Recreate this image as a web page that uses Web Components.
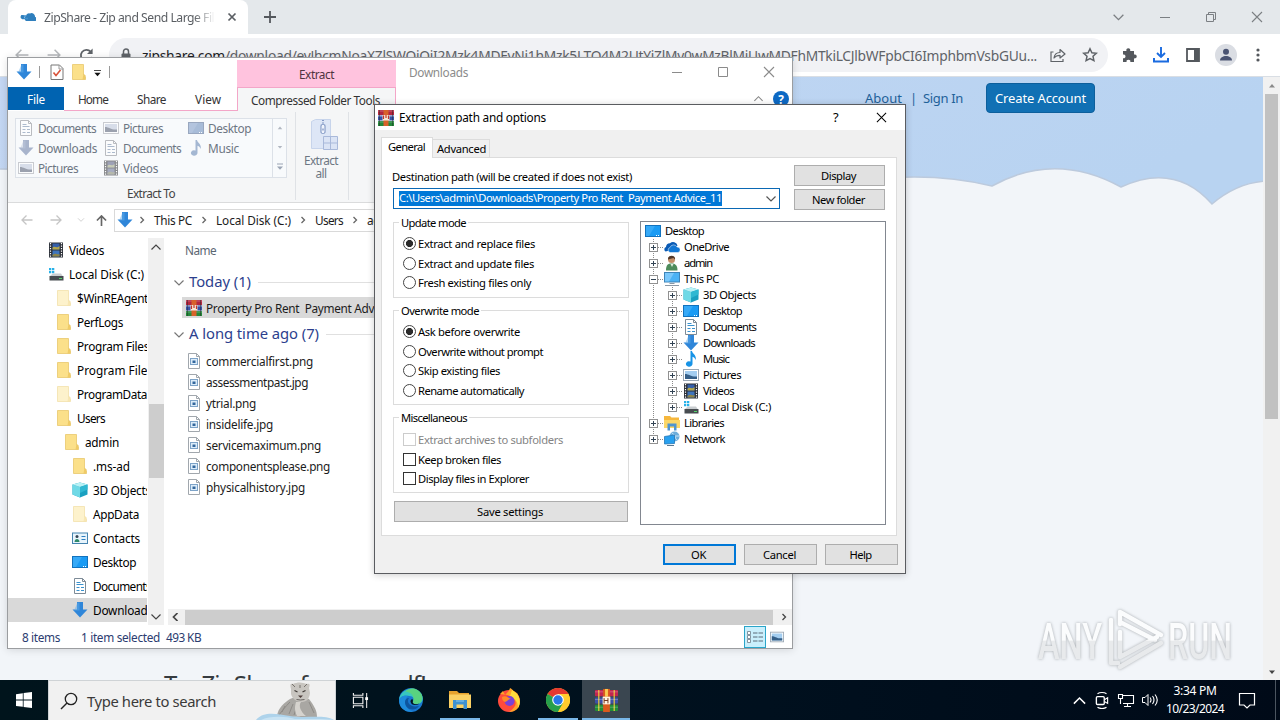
<!DOCTYPE html>
<html lang="en">
<head>
<meta charset="utf-8">
<title>Desktop</title>
<style>
  body { margin: 0; overflow: hidden; background: #f2f5f9; }
</style>
</head>
<body>
<win-desktop></win-desktop>
<script>
const FONT = `"Noto Sans", "Open Sans", sans-serif`;

// All icons are drawn on the viewBox given first
const RAR_BOOKS = `
  <rect x="0" y="0" width="16" height="5" fill="#b3263f"/><rect x="0" y="5.5" width="16" height="5" fill="#3653a8"/><rect x="0" y="11" width="16" height="5" fill="#23883a"/>
  <path d="M0 1h16M0 6.500h16M0 12h16" stroke="#fff" stroke-opacity=".35" stroke-width=".8"/>
  <path d="M1.500 0v16M14.500 0v16" stroke="#222" stroke-opacity=".45"/>
  <rect x="5.500" y="0" width="5" height="16" fill="#d8622a"/><rect x="4.500" y="5" width="7" height="5.500" fill="#f7ead5"/><path d="M5.500 5.500v3.500M8 5v3M10.500 5.500v3.500" stroke="#c2352b" stroke-width="1.200" fill="none"/>`;
const ICONS = {
  down: ["0 0 16 16", `<path d="M5 0h6v7.500h4.500L8 15.500.500 7.500H5z" fill="#2f86d9"/><path d="M5.500.500h2v8H2z" fill="#62abea" opacity=".5"/>`],
  folder: ["0 0 16 16", `<path d="M1.500.500h11v12l2 3h-13z" fill="#fbe08a"/><path d="M12.500 9.500l2 2v4h-3z" fill="#f0cb66"/><path d="M1.500.500h11V11l2 2v2.500h-13z" fill="none" stroke="#e8c86c" stroke-width=".8"/>`],
  folderlight: ["0 0 16 16", `<path d="M1.500.500h11v12l2 3h-13z" fill="#fdf2cc"/><path d="M12.500 9.500l2 2v4h-3z" fill="#f8e7b4"/><path d="M1.500.500h11V11l2 2v2.500h-13z" fill="none" stroke="#f2e1ab" stroke-width=".8"/>`],
  rar: ["0 0 16 16", RAR_BOOKS],
  monitor: ["0 0 16 16", `<rect x=".5" y="2.500" width="15" height="11" fill="#1a9bf4" stroke="#1272bd"/><path d="M1 3h9L4 13H1z" fill="#58bbfb" opacity=".45"/><path d="M11 12.500h1M13 12.500h1" stroke="#fff"/>`],
  pc: ["0 0 16 16", `<rect x=".5" y="1.500" width="15" height="9.500" fill="#4bb2f5" stroke="#3e84b8"/><path d="M1 2h9L5 10.500H1z" fill="#a3dbff" opacity=".55"/><path d="M5.500 12.500h5M1 14.500h14" stroke="#8b98a5"/>`],
  onedrive: ["0 0 16 16", `<path d="M1.500 12.500A2.500 2.500 0 0 1 2 8a4 4 0 0 1 4-3.800 4.500 4.500 0 0 1 7.500 2.300L10 10.500z" fill="#0a5bb5"/><path d="M6 13.500a2.600 2.600 0 0 1 0-5 3.800 3.800 0 0 1 7-.5 2.800 2.800 0 0 1 1 5.500z" fill="#1277d4" stroke="#fff" stroke-width=".5"/>`],
  user: ["0 0 16 16", `<circle cx="7.500" cy="4.500" r="3.500" fill="#c38e68"/><path d="M4 4.500C3.500-.5 12-.5 11 4.500L9.500 3z" fill="#51382a"/><path d="M2 15.500c0-6 2-7 5.500-7s6 1.500 6 7z" fill="#4d8b5b"/><path d="M6.500 9l1.500 3 1.500-3z" fill="#dfeee0"/>`],
  cube: ["0 0 16 16", `<path d="M8 .500l7.500 2v10L8 15.500.500 12.500v-10z" fill="#1aa0c0"/><path d="M.5 2.500L8 5v10.500L.500 12.500z" fill="#6fd9e6"/><path d="M.5 2.500l7.500-2 7.500 2L8 5z" fill="#b8f1f5"/><path d="M8 5l7.500-2.500v5L8 11z" fill="#2fb8d2"/>`],
  doc: ["0 0 16 16", `<path d="M2.500.500h8l3 3v12h-11z" fill="#fff" stroke="#7d8b97"/><path d="M10.500.500v3h3" fill="none" stroke="#7d8b97"/><path d="M4.500 4.500h4M4.500 6.500h7M4.500 9.500h3M9 9.500h3M4.500 12.500h3M9 12.500h3" stroke="#3a92ce"/>`],
  music: ["0 0 16 16", `<path d="M7.500 0h1.500c.5 3 5 4 3.500 9C12 6.500 10 6 9.500 5.800V13a3.300 2.700 0 1 1-2-2.500z" fill="#1793e6"/>`],
  picture: ["0 0 16 16", `<rect x=".5" y="2.500" width="15" height="11" fill="#fff" stroke="#9ba8b5"/><rect x="2" y="4" width="12" height="8" fill="#a3cdf0"/><path d="M2 7c4 0 6 3 12 2.500V12H2z" fill="#355f88"/>`],
  film: ["0 0 16 16", `<rect x="1" y=".5" width="14" height="15" fill="#2c3038"/><path d="M2.500 1v14M13.500 1v14" stroke="#fff" stroke-width="1.200" stroke-dasharray="1.200 1.300"/><rect x="4.500" y="1.500" width="7" height="6" fill="#345faa"/><path d="M4.500 6c2-3 4 1 7-2v3.500h-7z" fill="#b3a64a"/><rect x="4.500" y="8.500" width="7" height="6" fill="#3f75bd"/><path d="M4.500 13c3-3 4 0 7-1v2.500h-7z" fill="#8f8447"/>`],
  disk: ["0 0 16 16", `<path d="M1 2h2.300v2.300H1zM4 2h2.300v2.300H4zM1 5h2.300v2.300H1zM4 5h2.300v2.300H4z" fill="#27b1e8"/><path d="M3 9l2-1.500h8l2 3H1.500z" fill="#c9cdd0"/><rect x="1.500" y="10" width="14" height="4.500" fill="#474c50"/><rect x="11" y="12" width="3" height="1" fill="#54d66a"/>`],
  libs: ["0 0 16 16", `<path d="M0 1h6l1.500 1.500H15V13H0z" fill="#f6b73c"/><path d="M0 5h16v8H0z" fill="#fbd768"/><path d="M3.500 15.500V8.500h9v7h-2.500v-4H6v4z" fill="#4f95cf"/>`],
  network: ["0 0 16 16", `<circle cx="10.500" cy="5.500" r="5" fill="#6eaedb"/><path d="M8 2c3 1 3 6 5 7M6 5h9" stroke="#c7e3f5" fill="none"/><path d="M.5 5.500l10-1.500v8.500l-10 .5z" fill="#28a0ef" stroke="#2377b7" stroke-width=".8"/><path d="M3 14.500h7" stroke="#5b7890"/>`],
  contacts: ["0 0 16 16", `<rect x=".5" y="3" width="15" height="10.500" fill="#e7f4fc" stroke="#4583af"/><circle cx="5" cy="6.500" r="1.500" fill="#345"/><path d="M2.500 12c0-4 5-4 5 0z" fill="#2e8a6a"/><path d="M9.500 6.500h4M9.500 9.500h4" stroke="#2d7fc1"/>`],
  imgfile: ["0 0 16 16", `<path d="M2.500.500h8l3 3v12h-11z" fill="#fff" stroke="#a1a7ad"/><path d="M10.500.500v3h3" fill="none" stroke="#a1a7ad"/><rect x="4.500" y="5.500" width="7" height="6" fill="#dcecf9" stroke="#7da3c8"/><rect x="6.500" y="7.500" width="3" height="2.500" fill="#33679d"/>`],
  checkpage: ["0 0 16 16", `<path d="M2 1h8.500L14 4.500V15.500H2z" fill="#fff" stroke="#777"/><path d="M10 1v4h4" fill="none" stroke="#999"/><path d="M4.500 8.500l2.500 3L11.500 6" fill="none" stroke="#d9533a" stroke-width="1.600"/>`],
  gallerymore: ["0 0 8 8", `<path d="M1 1h6" stroke="#9aa4b4"/><path d="M1 3.500h6L4 6.800z" fill="#9aa4b4"/>`],
  triup: ["0 0 8 8", `<path d="M1 5.500h6L4 2z" fill="currentColor"/>`],
  tridown: ["0 0 8 8", `<path d="M1 2.500h6L4 6z" fill="currentColor"/>`],
  qat: ["0 0 8 8", `<path d="M0 .5h8" stroke="#222"/><path d="M.5 3h7L4 7z" fill="#111"/>`],
  zip: ["0 0 28 32", `<path d="M1.500 2.500l4-2h15v27l-4 2h-15z" fill="#dde6f6" stroke="#c7d4eb"/><path d="M13 5v9" stroke="#b3c2e0" stroke-width="5" opacity=".5"/><path d="M13 1v6" stroke="#8197c3" stroke-dasharray="1 1.500" stroke-width="2"/><rect x="11" y="5.500" width="4" height="9" rx="1.500" fill="#f0f4fc" stroke="#7e95c2"/><path d="M12.500 10.500h1" stroke="#5f7ab0" stroke-width="2"/><path d="M13.500 17.500h14v13h-14z" fill="#dbe4f5" stroke="#a9b9da"/><path d="M20.500 17v14M13 24h15" stroke="#a9b9da"/>`],
  larrow: ["0 0 12 12", `<path d="M11.500 6H1M5.500 1.500L1 6l4.500 4.500" fill="none" stroke="currentColor" stroke-width="1.300"/>`],
  rarrow: ["0 0 12 12", `<path d="M.5 6H11M6.500 1.500L11 6l-4.500 4.500" fill="none" stroke="currentColor" stroke-width="1.300"/>`],
  uarrow: ["0 0 12 12", `<path d="M6 12V1M1 6l5-5 5 5" fill="none" stroke="currentColor" stroke-width="1.800"/>`],
  cright: ["0 0 8 8", `<path d="M2.500 1l3 3-3 3" fill="none" stroke="currentColor" stroke-width="1.300"/>`],
  cleft: ["0 0 8 8", `<path d="M5.500 0l-4 4 4 4" fill="none" stroke="currentColor" stroke-width="1.700"/>`],
  cdown: ["0 0 12 12", `<path d="M1.500 3.500L6 8l4.500-4.500" fill="none" stroke="currentColor" stroke-width="1.200"/>`],
  cup: ["0 0 12 12", `<path d="M1.500 8.500L6 4l4.500 4.500" fill="none" stroke="currentColor" stroke-width="1.200"/>`],
  close: ["0 0 12 12", `<path d="M1 1l10 10M11 1L1 11" fill="none" stroke="currentColor" stroke-width="1.100"/>`],
  closebold: ["0 0 12 12", `<path d="M2.500 2.500l7 7M9.500 2.500l-7 7" fill="none" stroke="currentColor" stroke-width="1.700"/>`],
  max: ["0 0 12 12", `<path d="M1.500 1.500h9v9h-9z" fill="none" stroke="currentColor"/>`],
  min: ["0 0 12 12", `<path d="M1 6.500h10" stroke="currentColor"/>`],
  restore: ["0 0 12 12", `<path d="M1.500 3.500h7v7h-7zM3.500 3.500v-2h7v7h-2" fill="none" stroke="currentColor"/>`],
  plus: ["0 0 12 12", `<path d="M6 0v12M0 6h12" stroke="currentColor" stroke-width="1.800"/>`],
  favicon: ["0 0 16 16", `<path d="M6 12a3 3 0 0 1 0-5 3 3 0 0 1 4-2.500A3.500 3.500 0 0 1 15 8a2 2 0 0 1 0 4z" fill="#2f7fbd"/><path d="M1 7h5M2 9.500h6" stroke="#3d8fce" stroke-width="1.600"/><circle cx="2.500" cy="8" r="2" fill="#2f7fbd"/>`],
  reload: ["0 0 16 16", `<path d="M13.800 9.500A6 6 0 1 1 12.500 4" fill="none" stroke="#5f6368" stroke-width="1.900"/><path d="M14.500.500v6h-6z" fill="#5f6368"/>`],
  lock: ["0 0 12 14", `<rect x="1.500" y="5.500" width="9" height="8" rx="1" fill="#5f6368"/><path d="M3.500 6V3.500a2.500 2.500 0 0 1 5 0V6" fill="none" stroke="#5f6368" stroke-width="1.500"/>`],
  share: ["0 0 16 16", `<path d="M3.500 5H1v9.500h12V12" fill="none" stroke="#5f6368" stroke-width="1.200"/><path d="M4 11c.5-4 3-5.500 6-5.500V2.500L15 7l-5 4V8.300C7.500 8.300 5.500 9 4 11z" fill="none" stroke="#5f6368" stroke-width="1.200" stroke-linejoin="round"/>`],
  star: ["0 0 16 16", `<path d="M8 1.800l1.900 4 4.400.5-3.300 3 .9 4.300L8 11.500l-3.900 2.100.9-4.300-3.300-3 4.400-.5z" fill="none" stroke="#5f6368" stroke-width="1.500"/>`],
  puzzle: ["0 0 16 16", `<path d="M2 4h3.500a2 2 0 1 1 3.600 0H13v3.600a2 2 0 1 1 0 3.700V15H9.300a1.900 1.900 0 1 0-3.700 0H2v-3.800a1.900 1.900 0 1 0 0-3.600z" fill="#54585d"/>`],
  download: ["0 0 16 16", `<path d="M8 0v9.500M4 6l4 4 4-4" fill="none" stroke="#1a6be0" stroke-width="1.900"/><path d="M1 11v3.500h14V11" fill="none" stroke="#1a6be0" stroke-width="2"/>`],
  panel: ["0 0 16 16", `<path d="M2 2h12v12H2z" fill="none" stroke="#54585d" stroke-width="1.800"/><path d="M9 2h5v12H9z" fill="#54585d"/>`],
  avatar: ["0 0 22 22", `<circle cx="11" cy="11" r="11" fill="#dadde3"/><circle cx="11" cy="7.700" r="3" fill="#4a5473"/><path d="M5 16.500c0-6 12-6 12 0z" fill="#4a5473"/>`],
  dots: ["0 0 4 14", `<circle cx="2" cy="2" r="1.600" fill="#54585d"/><circle cx="2" cy="7" r="1.600" fill="#54585d"/><circle cx="2" cy="12" r="1.600" fill="#54585d"/>`],
  details: ["0 0 18 14", `<path d="M1.500 1.500h3v3h-3zM1.500 5.500h3v3h-3zM1.500 9.500h3v3h-3z" fill="#fff" stroke="#6b7a86" stroke-width=".8"/><path d="M7 3h4.500M12.500 3H17M7 7h4.500M12.500 7H17M7 11h4.500M12.500 11H17" stroke="#5a6b78"/>`],
  start: ["0 0 16 16", `<path d="M0 2.200l6.800-1v6.400H0zM7.600 1.100L16 0v7.600H7.600zM0 8.400h6.800v6.400L0 13.900zM7.600 8.400H16V16l-8.400-1.100z" fill="#fff"/>`],
  search: ["0 0 18 18", `<circle cx="11" cy="7" r="5.700" fill="none" stroke="#222" stroke-width="1.300"/><path d="M7 11L1 17" stroke="#222" stroke-width="1.400"/>`],
  cougar: ["0 0 80 38", `
    <path d="M22 34c1-8 7-13 13-17l5-2 14 2c6 8 8 12 8 18l-9 2c-9-5-23 0-31-3z" fill="#a9a7a3"/>
    <path d="M36 7c-1-4-1-6 2-5 4-2 9-2 14 0 3-1 3 1 2 4l1 5c-1 7-4 9-9 9s-9-4-10-8z" fill="#c8c5c0"/>
    <path d="M37 2l3 3M52 2l-3 3M45 3v3" stroke="#77726d"/><path d="M39.500 8.500l3 1.500M50.500 8.500l-3 1.500" stroke="#3f3a36" stroke-width="1.300"/>
    <path d="M43 13.500h5L45.500 16z" fill="#4c3c39"/><path d="M41.500 17.500l4 .5 4-.5" stroke="#6a6563" fill="none"/>
    <path d="M35 20c-5 5-8 9-11 13M38 22l-4 10M30 24l-3 6M54 20l5 11M42 24l-3 9" stroke="#8e8b87" fill="none"/>
    <path d="M46 20c-3 4 0 10 5 14h-9c-3-6-2-10-1-14z" fill="#d6d3ce"/>
    <path d="M1 38c8-9 20-6 34-4 14 3 34-2 44 4z" fill="#aed3eb"/>
    <path d="M6 38c8-4 24-4 34-1h26l14 1z" fill="#c9e3f3"/>`],
  taskview: ["0 0 18 18", `<path d="M1.500 1v2.500h10V1M1.500 17v-2.500h10V17M1.500 5.500h10v7h-10z" fill="none" stroke="#eee" stroke-width="1.200"/><path d="M15.500 1v16" stroke="#ddd" stroke-width="1.200"/><rect x="14" y="5.500" width="3" height="3" fill="#fff"/>`],
  edge: ["0 0 24 24", `<circle cx="12" cy="12" r="12" fill="#1977cf"/><path d="M.3 10C3 0 17-3 22.500 6c3 6 0 11-6 10-3-.5-3-1.500-2-3 1-3-1-5-4-5C6 7 1 8 .3 12z" fill="#37c6c0"/><path d="M14 .2C24 2 26 13 20 15.500c-3 1-7 .5-6-2C16 8 12 4 6 3.500 9 1 11 .2 14 .2z" fill="#65d66b" opacity=".75"/><path d="M9 8c-4 3-4 13 5 15.500C5 25-1 18 .3 11 3 7 7 7 9 8z" fill="#1e8bdc"/><path d="M10 10c-3 4 1 10 10 8-4 6-14 4-14-4 0-2 1.500-4 4-4z" fill="#0d559f"/><path d="M14 13c-1.500 3 3 4 6.500 2.500-4 3-8.500 1.500-9-2 0-1.500 1-2.500 2-2.500z" fill="#03131d"/>`],
  explorer: ["0 0 24 24", `<path d="M1 3h8l2 2h10v4H1z" fill="#e7a32e"/><path d="M1 6.500h22V20H1z" fill="#fbd164"/><path d="M5 21v-9h14v9h-3.500v-4.500h-7V21z" fill="#3e91d1"/><path d="M8 13h8" stroke="#8ccbf1"/>`],
  firefox: ["0 0 24 24", `<circle cx="12" cy="13" r="11" fill="#ff4b3c"/><path d="M3 6l3-3 2 4c3-3 4-4 5-7 4 2 3 4 7 5 6 10 2 19-8 19 8-5 9-11 2-15C11 6 6 7 3 6z" fill="#ffa329"/><path d="M15 2c9 5 9 13 6 18 0-7-3-9-8-12z" fill="#ffdd3c"/><circle cx="12.500" cy="13" r="5" fill="#7a42d8"/><path d="M5 9c4-2 6 1 9 2-3 0-4 3-6 3-2-1-3-2-3-5z" fill="#ff8a27"/>`],
  chrome: ["0 0 24 24", `<circle cx="12" cy="12" r="12" fill="#ffcb2d"/><path d="M12 12L1.600 6A12 12 0 0 1 22.400 6H12z" fill="#e5392f"/><path d="M12 12L1.600 6A12 12 0 0 0 12 24l5.200-9z" fill="#269f4b"/><path d="M12 6h10.400A12 12 0 0 1 12 24l5.200-9z" fill="#ffcb2d"/><circle cx="12" cy="12" r="5.800" fill="#fff"/><circle cx="12" cy="12" r="4.700" fill="#2878e8"/>`],
  rarbig: ["0 0 26 24", `<rect x="1" y="1" width="24" height="6.500" rx="1" fill="#c22650"/><rect x="1" y="9" width="24" height="6" rx="1" fill="#3c50a6"/><rect x="1" y="16.500" width="24" height="6.500" rx="1" fill="#218d37"/><path d="M5 1v22M21 1v22" stroke="#efcf3b" stroke-width="1.200"/><path d="M1 3h24M1 11h24M1 19h24" stroke="#fff" stroke-opacity=".25"/><rect x="9.500" y="0" width="7" height="24" fill="#db5a1d"/><path d="M13 0v8" stroke="#f9cb53" stroke-width="3"/><path d="M9 8h8v8H9z" fill="#fff3e0"/><path d="M10.500 9.500v5.500M10.500 12h4M14.500 9.500v5.500" stroke="#713015" fill="none"/>`],
  meet: ["0 0 16 16", `<rect x="3" y="5" width="7" height="7" rx="1" fill="none" stroke="#fff" stroke-width="1.200"/><path d="M10.500 7.500L13 6v5l-2.500-1.500M4 2.500c2-1.500 6-1.500 8 0M4 14.500c2 1.500 6 1.500 8 0" fill="none" stroke="#fff"/>`],
  net: ["0 0 18 16", `<path d="M5 3.500h11.500v8H6M10.500 12v2.500M7 14.500h7" fill="none" stroke="#fff" stroke-width="1.100"/><path d="M1.500 2.500h4v4h-4zM3.500 7v5" fill="none" stroke="#fff" stroke-width="1.100"/>`],
  sound: ["0 0 18 16", `<path d="M1.500 5.500h2.500L7 2.500v11L4 10.500H1.500z" fill="none" stroke="#fff"/><path d="M9 5.500q2 2.500 0 5M11.500 4q3 4 0 8M14 2.500q4.500 5.500 0 11" fill="none" stroke="#fff" stroke-width="1.100"/>`],
  notify: ["0 0 18 18", `<path d="M1.500 2.500h15v11.500H12L9 17l-3-3H1.500z" fill="none" stroke="#fff" stroke-width="1.200"/>`]
};

class UIIcon extends HTMLElement {
  connectedCallback() {
    if (this.shadowRoot) return;
    this.attachShadow({ mode: "open" });
    const [box, art] = ICONS[this.getAttribute("name")];
    const w = this.getAttribute("w") || 16;
    const h = this.getAttribute("h") || w;
    this.shadowRoot.innerHTML = `
      <style>
        :host { display: block; flex: none; width: ${w}px; height: ${h}px; }
        svg { display: block; }
      </style>
      <svg width="${w}" height="${h}" viewBox="${box}">${art}</svg>`;
  }
}

// One line of text, letter-spaced so that it fills the width in the w attribute
class FitText extends HTMLElement {
  connectedCallback() {
    if (this.shadowRoot) return;
    this.attachShadow({ mode: "open" });
    this.shadowRoot.innerHTML = `
      <style>
        :host { display: block; flex: none; }
        span { display: inline-block; white-space: pre; }
      </style>
      <span><slot></slot></span>`;
    const w = parseFloat(this.getAttribute("w"));
    const span = this.shadowRoot.querySelector("span");
    const natural = span.getBoundingClientRect().width;
    if (!w || !natural) return;
    const count = this.textContent.length;
    span.style.letterSpacing = (w - natural) / count + "px";
    this.style.width = w + "px";
  }
}

class WinButton extends HTMLElement {
  constructor() {
    super();
    this.attachShadow({ mode: "open" }).innerHTML = `
      <style>
        :host {
          display: flex; align-items: center; justify-content: center;
          box-sizing: border-box; height: 21px; padding-right: 2px;
          background: #e1e1e1; border: 1px solid #adadad;
        }
        :host([primary]) { border: 2px solid #0078d7; }
      </style>
      <slot></slot>`;
  }
}

class OptionRow extends HTMLElement {
  constructor() {
    super();
    this.attachShadow({ mode: "open" }).innerHTML = `
      <style>
        :host { display: flex; align-items: center; gap: 2px; height: 19.5px; }
        :host([disabled]) { color: #848484; }
        .mark {
          box-sizing: border-box; width: 13px; height: 13px; flex: none;
          border: 1px solid #333; background: #fff;
        }
        :host([radio]) .mark { border-radius: 50%; border-color: #444; }
        :host([checked]) .mark { background: radial-gradient(circle, #2b2b2b 0 3.2px, #fff 3.900px); }
        :host([disabled]) .mark { border-color: #ccc; }
      </style>
      <span class="mark"></span><slot></slot>`;
  }
}

class GroupBox extends HTMLElement {
  constructor() {
    super();
    this.attachShadow({ mode: "open" }).innerHTML = `
      <style>
        :host { display: block; box-sizing: border-box; border: 1px solid #dcdcdc; padding: 0 9px; }
        .legend { width: max-content; height: 16px; line-height: 16px; margin: -8px 0 var(--legend-gap, 3px) -4px; padding: 0 2px; background: #fff; }
      </style>
      <div class="legend"><slot name="legend"></slot></div>
      <slot></slot>`;
  }
}

const TREE = [
  [0, "monitor", "Desktop", 39],
  [1, "onedrive", "OneDrive", 45, "+"],
  [1, "user", "admin", 28, "+"],
  [1, "pc", "This PC", 35, "-"],
  [2, "cube", "3D Objects", 53, "+"],
  [2, "monitor", "Desktop", 39, "+"],
  [2, "doc", "Documents", 53, "+"],
  [2, "down", "Downloads", 52, "+"],
  [2, "music", "Music", 26, "+"],
  [2, "picture", "Pictures", 38, "+"],
  [2, "film", "Videos", 31, "+"],
  [2, "disk", "Local Disk (C:)", 68, "+", "last"],
  [1, "libs", "Libraries", 40, "+"],
  [1, "network", "Network", 41, "+", "last"]
];

class FolderTree extends HTMLElement {
  connectedCallback() {
    const line = `stroke="#8a8a8a" stroke-dasharray="1 1"`;
    const pipe = `<svg width="19" height="16"><path d="M9.500 0v16" ${line}/></svg>`;
    const rows = TREE.map(([level, icon, text, w, sign, last]) => {
      const knob = level ? `<svg width="19" height="16">
        <path d="M9.500 0v${last ? 8 : 16}M10 8.500h9" ${line}/>
        <rect x="5.500" y="4.500" width="8" height="8" fill="#fff" stroke="#919191"/>
        <path d="M7 8.500h5${sign === "+" ? "M9.500 6v5" : ""}" stroke="#345"/></svg>` : "";
      return `<div class="row l${level}">${level === 2 ? pipe : ""}${knob}
        <ui-icon name="${icon}"></ui-icon><fit-text w="${w}">${text}</fit-text></div>`;
    }).join("");
    this.attachShadow({ mode: "open" }).innerHTML = `
      <style>
        :host { display: block; box-sizing: border-box; border: 1px solid #828790; background: #fff; padding: 1px 3px; }
        .row { display: flex; align-items: center; height: 16px; }
        svg { display: block; flex: none; }
        ui-icon { margin: 0 4px 0 1px; }
        fit-text { margin-top: -2px; }
      </style>${rows}`;
  }
}

const option = (text, w, attrs) => `<option-row ${attrs}><fit-text w="${w}">${text}</fit-text></option-row>`;

class ExtractDialog extends HTMLElement {
  constructor() {
    super();
    this.attachShadow({ mode: "open" }).innerHTML = `
      <style>
        :host {
          display: flex; flex-direction: column; box-sizing: border-box;
          width: 532px; height: 470px; border: 1px solid #5a5c60; background: #f0f0f0;
          font: 11.2px ${FONT}; color: #000; box-shadow: 0 1px 7px rgba(0, 0, 0, .2);
        }
        header { display: flex; align-items: center; height: 25px; background: #fff; padding: 0 18px 0 3px; font-size: 11.8px; }
        header fit-text:first-of-type { margin: -2px auto 0 5px; }
        header fit-text:last-of-type { margin: -1px 36px 0 0; font-size: 13px; }
        .tabs { display: flex; align-items: flex-end; height: 27px; padding-left: 6px; position: relative; z-index: 1; }
        .tab { box-sizing: border-box; border: 1px solid #dcdcdc; border-bottom: 0; }
        .tab.on { width: 52px; height: 21px; margin-bottom: -1px; padding: 1px 0 0 6px; background: #fff; }
        .tab.off { width: 57px; height: 18px; padding: 0 0 0 4px; line-height: 17px; border-left: 0; }
        .panel { box-sizing: border-box; width: 516px; height: 379px; margin-left: 6px; border: 1px solid #dcdcdc; background: #fff; padding: 7px 10px 0 11px; }
        .top { display: flex; gap: 14px; height: 45px; }
        .dest { width: 387px; }
        .label { height: 23px; display: flex; align-items: center; margin-left: -1px; }
        .combo { display: flex; align-items: center; justify-content: space-between; box-sizing: border-box; height: 21px; border: 1px solid #0a68b4; padding: 0 2px 0 5px; color: #555; }
        .picked { background: #0078d7; color: #fff; height: 15px; line-height: 14px; box-sizing: border-box; }
        .side { width: 91px; display: grid; align-content: start; gap: 3px; }
        .main { display: flex; gap: 11px; }
        .modes { width: 236px; padding-top: 12px; display: flex; flex-direction: column; gap: 12px; }
        .modes win-button { margin: -4px 1px 0; }
        folder-tree { width: 246px; height: 304px; margin-top: 11px; }
        footer { display: flex; justify-content: flex-end; gap: 8px; padding: 8px 7px 0; }
        footer win-button { width: 73px; }
      </style>
      <header>
        <ui-icon name="rar" w="16"></ui-icon><fit-text w="147">Extraction path and options</fit-text>
        <fit-text w="7">?</fit-text><ui-icon name="close" w="11"></ui-icon>
      </header>
      <div class="tabs">
        <div class="tab on"><fit-text w="37">General</fit-text></div>
        <div class="tab off"><fit-text w="49">Advanced</fit-text></div>
      </div>
      <div class="panel">
        <div class="top">
          <div class="dest">
            <div class="label"><fit-text w="240">Destination path (will be created if does not exist)</fit-text></div>
            <div class="combo">
              <fit-text class="picked" w="323">C:\\Users\\admin\\Downloads\\Property Pro Rent  Payment Advice_11</fit-text>
              <ui-icon name="cdown" w="12"></ui-icon>
            </div>
          </div>
          <div class="side">
            <win-button><fit-text w="35">Display</fit-text></win-button>
            <win-button><fit-text w="53">New folder</fit-text></win-button>
          </div>
        </div>
        <div class="main">
          <div class="modes">
            <group-box style="height:76px">
              <fit-text slot="legend" w="65">Update mode</fit-text>
              ${option("Extract and replace files", 117, "radio checked")}
              ${option("Extract and update files", 116, "radio")}
              ${option("Fresh existing files only", 113, "radio")}
            </group-box>
            <group-box style="height:95px">
              <fit-text slot="legend" w="78">Overwrite mode</fit-text>
              ${option("Ask before overwrite", 102, "radio checked")}
              ${option("Overwrite without prompt", 125, "radio")}
              ${option("Skip existing files", 82, "radio")}
              ${option("Rename automatically", 106, "radio")}
            </group-box>
            <group-box style="height:76px;--legend-gap:4px">
              <fit-text slot="legend" w="66">Miscellaneous</fit-text>
              ${option("Extract archives to subfolders", 145, "disabled")}
              ${option("Keep broken files", 83, "")}
              ${option("Display files in Explorer", 111, "")}
            </group-box>
            <win-button><fit-text w="66">Save settings</fit-text></win-button>
          </div>
          <folder-tree></folder-tree>
        </div>
      </div>
      <footer>
        <win-button primary><fit-text w="15">OK</fit-text></win-button>
        <win-button><fit-text w="33">Cancel</fit-text></win-button>
        <win-button><fit-text w="22">Help</fit-text></win-button>
      </footer>`;
  }
}

const GALLERY = [
  ["doc", "Documents", 58], ["picture", "Pictures", 40], ["monitor", "Desktop", 43],
  ["down", "Downloads", 59], ["doc", "Documents", 58], ["music", "Music", 31],
  ["picture", "Pictures", 40], ["film", "Videos", 35]
];

class ExplorerRibbon extends HTMLElement {
  constructor() {
    super();
    const items = GALLERY.map(([icon, text, w]) =>
      `<div class="item"><ui-icon name="${icon}"></ui-icon><fit-text w="${w}">${text}</fit-text></div>`).join("");
    this.attachShadow({ mode: "open" }).innerHTML = `
      <style>
        :host { display: flex; height: 91px; background: #f5f6f7; border-bottom: 1px solid #dadbdc; color: #6d7683; }
        .group { width: 288px; padding: 6px 0 0 7px; box-sizing: border-box; border-right: 1px solid #dfe2e6; margin: 1px 0 2px; height: 88px; }
        .gallery { display: flex; box-sizing: border-box; width: 272px; height: 60px; border: 1px solid #dce1e8; background: #f8fafc; }
        .grid { display: grid; grid-template-columns: 85px 85px 86px; grid-auto-rows: 20px; flex: 1; }
        .item { display: flex; align-items: center; gap: 4px; padding-left: 2px; margin-top: -2px; }
        .item ui-icon { filter: saturate(.4) hue-rotate(15deg); opacity: .55; }
        .more { width: 14px; border-left: 1px solid #dce1e8; display: grid; place-items: center; color: #b0b6c0; }
        .name { margin-top: 7px; padding-right: 8px; color: #444; display: flex; justify-content: center; }
        .extract { width: 53px; border-right: 1px solid #dfe2e6; display: flex; flex-direction: column; align-items: center; padding: 8px 2px 0 0; line-height: 13px; margin: 1px 0 2px; box-sizing: border-box; }
        .extract ui-icon { margin: -1px 0 3px 5px; }
      </style>
      <div class="group">
        <div class="gallery">
          <div class="grid">${items}</div>
          <div class="more"><ui-icon name="triup" w="6"></ui-icon><ui-icon name="tridown" w="6"></ui-icon><ui-icon name="gallerymore" w="8"></ui-icon></div>
        </div>
        <div class="name"><fit-text w="48">Extract To</fit-text></div>
      </div>
      <div class="extract">
        <ui-icon name="zip" w="28" h="32"></ui-icon><fit-text w="34">Extract</fit-text><fit-text w="11">all</fit-text>
      </div>`;
  }
}

const NAV = [
  [40, "film", "Videos", 35], [40, "disk", "Local Disk (C:)", 75],
  [48, "folderlight", "$WinREAgent", 71], [48, "folder", "PerfLogs", 46],
  [48, "folder", "Program Files", 72], [48, "folder", "Program Files (x86)", 106],
  [48, "folderlight", "ProgramData", 70], [48, "folder", "Users", 28],
  [56, "folder", "admin", 34], [64, "folder", ".ms-ad", 37],
  [64, "cube", "3D Objects", 58], [64, "folderlight", "AppData", 46],
  [64, "contacts", "Contacts", 47], [64, "monitor", "Desktop", 43],
  [64, "doc", "Documents", 58], [64, "down", "Downloads", 60]
];
const FILES = [
  ["commercialfirst.png", 107], ["assessmentpast.jpg", 102], ["ytrial.png", 50], ["insidelife.jpg", 67],
  ["servicemaximum.png", 115], ["componentsplease.png", 124], ["physicalhistory.jpg", 99]
];

class ExplorerWindow extends HTMLElement {
  constructor() {
    super();
    const nav = NAV.map(([pad, icon, text, w], i) =>
      `<div class="nav-row${i === NAV.length - 1 ? " on" : ""}" style="padding-left:${pad}px">
        <ui-icon name="${icon}"></ui-icon><fit-text w="${w}">${text}</fit-text></div>`).join("");
    const files = FILES.map(([text, w]) =>
      `<div class="file"><ui-icon name="imgfile"></ui-icon><fit-text w="${w}">${text}</fit-text></div>`).join("");
    const crumb = (text, w) => `<ui-icon name="cright" w="8"></ui-icon><fit-text w="${w}">${text}</fit-text>`;
    this.attachShadow({ mode: "open" }).innerHTML = `
      <style>
        :host {
          display: flex; flex-direction: column; box-sizing: border-box; overflow: hidden;
          width: 786px; height: 592px; border: 1px solid #9b9da0; background: #fff;
          font: 11.8px ${FONT}; color: #1c1c1c; box-shadow: 0 1px 8px rgba(0, 0, 0, .13);
        }
        .title { display: flex; align-items: center; box-sizing: border-box; height: 29px; padding: 0 17px 2px 8px; color: #8b8b8b; }
        .rule { width: 1px; height: 12px; background: #999; }
        .context { align-self: flex-end; box-sizing: border-box; width: 159px; height: 27px; margin-bottom: -2px; background: #ffc3de; color: #50333f; display: grid; place-items: center; }
        .title .caption { margin: 0 auto 0 13px; }
        .title .ctl { margin-left: 34px; }
        .tabs { display: flex; height: 24px; align-items: stretch; color: #333; }
        .tabs > * { box-sizing: border-box; display: flex; align-items: center; }
        .file-tab { width: 56px; height: 23px; justify-content: center; background: #0063b1; color: #fff; }
        .plain { width: 173px; padding-left: 14px; gap: 29px; border-bottom: 1px solid #f3a6c8; }
        .tool { width: 159px; justify-content: center; border: 1px solid #f3a6c8; border-bottom: 0; padding-right: 2px; background: #f5f6f7; }
        .rest { flex: 1; justify-content: flex-end; gap: 9px; padding-right: 3px; border-bottom: 1px solid #e4e5e6; color: #888; }
        .help { width: 16px; height: 16px; border-radius: 50%; background: #0d69c4; color: #fff; font-weight: 700; line-height: 16px; text-align: center; }
        .address { display: flex; align-items: center; height: 34px; margin-bottom: 1px; color: #666; }
        .address > ui-icon { color: #c5c5c5; }
        .address > .up { color: #666; }
        .path { box-sizing: border-box; width: 640px; height: 23px; margin: 0 0 0 7px; border: 1px solid #d9d9d9; display: flex; align-items: center; }
        .path fit-text { color: #1c1c1c; margin: -1px 8px 0; }
        .body { display: flex; height: 387px; }
        .nav { width: 139px; overflow: hidden; }
        .nav-row { display: flex; align-items: center; gap: 5px; height: 24px; color: #000; }
        .nav-row fit-text { margin-top: -1px; }
        .on { background: #d9d9d9; }
        .vbar { width: 16px; margin-left: 1px; background: #f0f0f0; display: flex; flex-direction: column; align-items: center; color: #444; box-sizing: border-box; padding: 3px 0 2px; }
        .vbar i { width: 15px; height: 74px; margin: 151px 0 auto; background: #cdcdcd; }
        .view { flex: 1; display: flex; flex-direction: column; padding-left: 4px; overflow: hidden; }
        .name { padding: 4px 0 0 17px; color: #5a6672; height: 23px; }
        .day { display: flex; align-items: center; gap: 4px; height: 29px; padding-left: 5px; font-size: 14.8px; color: #2c3f8e; }
        .day fit-text { margin-top: -3px; }
        .day i { flex: 1; height: 1px; background: #e0e0e0; margin-left: 3px; }
        .day ui-icon { color: #777; }
        .sel, .file { display: flex; align-items: center; gap: 4px; height: 21px; }
        .sel { margin-left: 14px; padding-left: 4px; background: #d9d9d9; }
        .file { padding-left: 18px; }
        .hbar { margin-top: auto; height: 16px; background: #f0f0f0; display: flex; align-items: center; justify-content: space-between; padding: 0 4px 0 4px; color: #444; }
        .hbar i { flex: 1; height: 15px; margin: 0 7px 0 5px; background: #cdcdcd; }
        .status { display: flex; align-items: center; height: 23px; padding: 0 8px 0 14px; color: #2b3c70; }
        .status .mode { box-sizing: border-box; width: 22px; height: 22px; display: grid; place-items: center; background: #c9effc; border: 1px solid #2aa5c9; margin: 0 4px 0 auto; }
      </style>
      <div class="title">
        <ui-icon name="down"></ui-icon><span class="rule" style="margin:0 11px 0 7px"></span>
        <ui-icon name="checkpage" style="margin-right:6px;margin-left:-2px"></ui-icon><ui-icon name="folder"></ui-icon>
        <ui-icon name="qat" w="7" style="margin:4px 8px 0 7px"></ui-icon><span class="rule"></span>
        <div class="context" style="margin-left:127px"><fit-text w="35">Extract</fit-text></div>
        <fit-text class="caption" w="59">Downloads</fit-text>
        <ui-icon name="min" w="12"></ui-icon><ui-icon class="ctl" name="max" w="12"></ui-icon><ui-icon class="ctl" name="close" w="12"></ui-icon>
      </div>
      <div class="tabs">
        <div class="file-tab"><fit-text w="18">File</fit-text></div>
        <div class="plain"><fit-text w="30">Home</fit-text><fit-text w="29">Share</fit-text><fit-text w="26">View</fit-text></div>
        <div class="tool"><fit-text w="129">Compressed Folder Tools</fit-text></div>
        <div class="rest"><ui-icon name="cup" w="11"></ui-icon><span class="help">?</span></div>
      </div>
      <explorer-ribbon></explorer-ribbon>
      <div class="address">
        <ui-icon name="larrow" w="12" style="margin:0 17px 0 13px"></ui-icon><ui-icon name="rarrow" w="12"></ui-icon>
        <ui-icon name="cdown" w="8" style="margin:0 11px 0 15px"></ui-icon><ui-icon class="up" name="uarrow" w="11"></ui-icon>
        <div class="path">
          <ui-icon name="down" w="16" style="margin:0 5px 0 2px"></ui-icon>
          ${crumb("This PC", 38)}${crumb("Local Disk (C:)", 75)}${crumb("Users", 28)}${crumb("admin", 34)}
        </div>
      </div>
      <div class="body">
        <div class="nav">${nav}</div>
        <div class="vbar"><ui-icon name="cup" w="12"></ui-icon><i></i><ui-icon name="cdown" w="12"></ui-icon></div>
        <div class="view">
          <div class="name"><fit-text w="31">Name</fit-text></div>
          <div class="day" style="margin-top:3px"><ui-icon name="cdown" w="12"></ui-icon><fit-text w="62">Today (1)</fit-text><i></i></div>
          <div class="sel"><ui-icon name="rar"></ui-icon><fit-text w="218">Property Pro Rent  Payment Advice_11.zip</fit-text></div>
          <div class="day" style="margin:2px 0 1px"><ui-icon name="cdown" w="12"></ui-icon><fit-text w="130">A long time ago (7)</fit-text><i></i></div>
          ${files}
          <div class="hbar"><ui-icon name="cleft" w="8"></ui-icon><i></i><ui-icon name="cright" w="8"></ui-icon></div>
        </div>
      </div>
      <div class="status">
        <fit-text w="38">8 items</fit-text><fit-text w="79" style="margin:0 6px 0 21px">1 item selected</fit-text><fit-text w="35">493 KB</fit-text>
        <span class="mode"><ui-icon name="details" w="18" h="14"></ui-icon></span><ui-icon name="picture" w="14"></ui-icon>
      </div>`;
  }
}

class BrowserWindow extends HTMLElement {
  constructor() {
    super();
    this.attachShadow({ mode: "open" }).innerHTML = `
      <style>
        :host { display: grid; grid-template-rows: 34px 43px 603px; width: 1280px; height: 680px; overflow: hidden; font: 12.2px ${FONT}; color: #5f6368; }
        .strip { display: flex; align-items: center; background: #e4e8eb; padding: 0 17px 0 8px; }
        .strip > ui-icon { color: #7b7f83; }
        .tab { box-sizing: border-box; display: flex; align-items: center; width: 240px; height: 34px; background: #fff; border-radius: 8px 8px 0 0; padding: 0 10px 0 12px; gap: 8px; margin-right: 16px; color: #5a5e63; }
        .tab ui-icon:last-child { margin-left: 2px; }
        .cut { width: 172px; overflow: hidden; -webkit-mask-image: linear-gradient(90deg, #000 150px, transparent 171px); }
        .strip .ctl { margin-left: 34px; }
        .bar { display: flex; align-items: center; background: #fff; padding: 0 20px 0 15px; border-bottom: 1px solid #d9dee4; }
        .bar .dim { color: #b4b7ba; }
        .omni { box-sizing: border-box; display: flex; align-items: center; width: 999px; height: 34px; border-radius: 17px; background: #f1f2f5; padding: 0 10px 0 11px; }
        .url { font-size: 13.8px; color: #5f6368; }
        .url b { font-weight: 400; color: #202124; }
        .page { display: flex; background: #f2f5f9; }
        .sky { position: relative; width: 1263px; overflow: hidden; }
        .clouds { display: block; }
        .site { display: flex; align-items: center; position: absolute; left: 865px; top: 6px; height: 30px; font-size: 13px; color: #1f6199; }
        .join { display: grid; place-items: center; width: 109px; height: 30px; margin-left: 23px; border-radius: 4px; box-sizing: border-box; background: #1170b4; border: 1px solid #0d5f9c; color: #fff; }
        .try { position: absolute; left: 164px; top: 590px; font-size: 24px; line-height: 34px; color: #363b40; }
        .scroll { width: 17px; background: #f1f1f1; display: flex; flex-direction: column; align-items: center; justify-content: space-between; color: #8a8a8a; box-sizing: border-box; padding: 5px 0 4px; }
        .scroll i { width: 13px; height: 325px; background: #c1c1c1; margin: 4px 0 auto; }
      </style>
      <div class="strip">
        <div class="tab"><ui-icon name="favicon"></ui-icon><div class="cut"><fit-text w="182">ZipShare - Zip and Send Large Files</fit-text></div><ui-icon name="closebold" w="12"></ui-icon></div>
        <ui-icon name="plus" w="12" style="color:#54585d"></ui-icon>
        <ui-icon name="cdown" w="13" style="margin-left:auto"></ui-icon><ui-icon class="ctl" name="min" w="12"></ui-icon><ui-icon class="ctl" name="restore" w="12"></ui-icon><ui-icon class="ctl" name="close" w="12"></ui-icon>
      </div>
      <div class="bar">
        <ui-icon class="dim" name="larrow" w="14"></ui-icon><ui-icon class="dim" name="rarrow" w="14" style="margin:0 18px"></ui-icon><ui-icon name="reload" w="15"></ui-icon>
        <div class="omni" style="margin:0 13px 0 15px">
          <ui-icon name="lock" w="12" h="14" style="margin-right:10px"></ui-icon>
          <fit-text class="url" w="895"><b>zipshare.com</b>/download/eyJhcmNoaXZlSWQiOiI2Mzk4MDEyNi1hMzk5LTQ4M2UtYjZlMy0wMzBlMjUwMDFhMTkiLCJlbWFpbCI6ImphbmVsbGUu...</fit-text>
          <ui-icon name="share" style="margin:0 16px 0 13px"></ui-icon><ui-icon name="star"></ui-icon>
        </div>
        <ui-icon name="puzzle"></ui-icon><ui-icon name="download" style="margin:0 16px"></ui-icon><ui-icon name="panel"></ui-icon>
        <ui-icon name="avatar" w="22" style="margin:0 19px 0 14px"></ui-icon><ui-icon name="dots" w="4" h="14"></ui-icon>
      </div>
      <div class="page">
        <div class="sky">
          <svg class="clouds" width="1263" height="603">
            <defs>
              <linearGradient id="air" x1="0" y1="0" x2="1" y2=".2"><stop offset="0" stop-color="#c4d7f3"/><stop offset="1" stop-color="#b8d3f1"/></linearGradient>
            </defs>
            <rect width="1263" height="150" fill="url(#air)"/>
            <path d="M-5 92L860 104Q930 94 992 109Q1055 74 1121 110Q1175 85 1212 127Q1238 105 1268 104V610H-5z" fill="#f2f5f9" stroke="#bccadd" stroke-width="1.500"/>
          </svg>
          <div class="site">
            <fit-text w="37">About</fit-text><fit-text w="4" style="margin:0 9px 0 8px">|</fit-text><fit-text w="40">Sign In</fit-text>
            <div class="join"><fit-text w="91">Create Account</fit-text></div>
          </div>
          <fit-text class="try" w="262">Try ZipShare for yourself!</fit-text>
        </div>
        <div class="scroll"><ui-icon name="triup" w="8"></ui-icon><i></i><ui-icon name="tridown" w="8" style="color:#444"></ui-icon></div>
      </div>`;
  }
}

class TaskBar extends HTMLElement {
  constructor() {
    super();
    const app = (icon, w, cls) => `<div class="app ${cls}"><ui-icon name="${icon}" w="${w}"></ui-icon></div>`;
    this.attachShadow({ mode: "open" }).innerHTML = `
      <style>
        :host { display: flex; align-items: center; width: 1280px; height: 40px; background: linear-gradient(90deg, #00141c, #00101e 60%, #000a18); font: 12px ${FONT}; color: #fff; }
        .start { width: 48px; display: grid; place-items: center; }
        .search { box-sizing: border-box; display: flex; align-items: center; width: 288px; height: 40px; background: #f1f1f1; border: 1px solid #cfd3d6; border-bottom: 0; padding-left: 11px; gap: 9px; font-size: 14.8px; color: #3a3a3a; }
        .search ui-icon:last-child { margin-left: auto; align-self: flex-end; }
        .app { box-sizing: border-box; width: 49px; height: 40px; display: grid; place-items: center; }
        .open { background: linear-gradient(#79b7e8, #79b7e8) center bottom / 40px 2px no-repeat; }
        .active { width: 48px; background: linear-gradient(#79b7e8, #79b7e8) bottom / 100% 2px no-repeat #3a4650; }
        .tray { display: flex; align-items: center; gap: 6px; margin-left: auto; }
        .clock { display: grid; justify-items: center; line-height: 18px; width: 60px; }
        .peek { width: 1px; height: 40px; background: #4b5560; margin: 0 4px 0 13px; }
      </style>
      <div class="start"><ui-icon name="start"></ui-icon></div>
      <div class="search"><ui-icon name="search" w="18"></ui-icon><fit-text w="129">Type here to search</fit-text><ui-icon name="cougar" w="80" h="38"></ui-icon></div>
      ${app("taskview", 17, "")}<span style="width:1px"></span>
      ${app("edge", 24, "")}${app("explorer", 24, "open")}${app("firefox", 24, "")}${app("chrome", 24, "open")}${app("rarbig", 25, "active")}
      <div class="tray">
        <ui-icon name="cup" w="15"></ui-icon><ui-icon name="meet" w="18"></ui-icon><ui-icon name="net" w="18" h="16"></ui-icon><ui-icon name="sound" w="18" h="16"></ui-icon>
        <div class="clock"><fit-text w="43">3:34 PM</fit-text><fit-text w="58">10/23/2024</fit-text></div>
        <ui-icon name="notify" w="18" style="margin-left:7px"></ui-icon><span class="peek"></span>
      </div>`;
  }
}

class AnyrunMark extends HTMLElement {
  constructor() {
    super();
    this.attachShadow({ mode: "open" }).innerHTML = `
      <style>
        :host { display: block; }
        svg { display: block; filter: drop-shadow(0 0 1.500px rgba(90, 95, 100, .5)); }
        text { font: 500 50px "Roboto", sans-serif; }
      </style>
      <svg width="200" height="68" viewBox="0 0 200 68">
        <defs><linearGradient id="fade" gradientUnits="userSpaceOnUse" x1="0" y1="0" x2="0" y2="68"><stop offset=".5" stop-color="#fbfcfd"/><stop offset=".52" stop-color="#e8eaec"/></linearGradient></defs>
        <g fill="url(#fade)">
          <text x="2" y="53" textLength="64" lengthAdjust="spacingAndGlyphs">ANY</text>
          <text x="132" y="53" textLength="64" lengthAdjust="spacingAndGlyphs">RUN</text>
        </g>
        <path d="M84 26V51L121 31M75 14V57L82 57M84 18V6L125 29M84 61L125 37M84 16L119 34" fill="none" stroke="url(#fade)" stroke-width="4.500" stroke-linejoin="round" stroke-linecap="round"/>
      </svg>`;
  }
}

class WinDesktop extends HTMLElement {
  constructor() {
    super();
    this.attachShadow({ mode: "open" }).innerHTML = `
      <style>
        :host { display: block; position: relative; width: 1280px; height: 720px; overflow: hidden; }
        explorer-window, extract-dialog, anyrun-mark { position: absolute; }
        explorer-window { left: 7px; top: 57px; }
        extract-dialog { left: 374px; top: 104px; }
        anyrun-mark { left: 1036px; top: 606px; }
        task-bar { position: relative; }
      </style>
      <browser-window></browser-window>
      <explorer-window></explorer-window>
      <extract-dialog></extract-dialog>
      <anyrun-mark></anyrun-mark>
      <task-bar></task-bar>`;
  }
}

customElements.define("ui-icon", UIIcon);
customElements.define("win-button", WinButton);
customElements.define("option-row", OptionRow);
customElements.define("group-box", GroupBox);
customElements.define("folder-tree", FolderTree);
customElements.define("explorer-ribbon", ExplorerRibbon);
customElements.define("extract-dialog", ExtractDialog);
customElements.define("explorer-window", ExplorerWindow);
customElements.define("browser-window", BrowserWindow);
customElements.define("task-bar", TaskBar);
customElements.define("anyrun-mark", AnyrunMark);
customElements.define("win-desktop", WinDesktop);
customElements.define("fit-text", FitText);
</script>
</body>
</html>
